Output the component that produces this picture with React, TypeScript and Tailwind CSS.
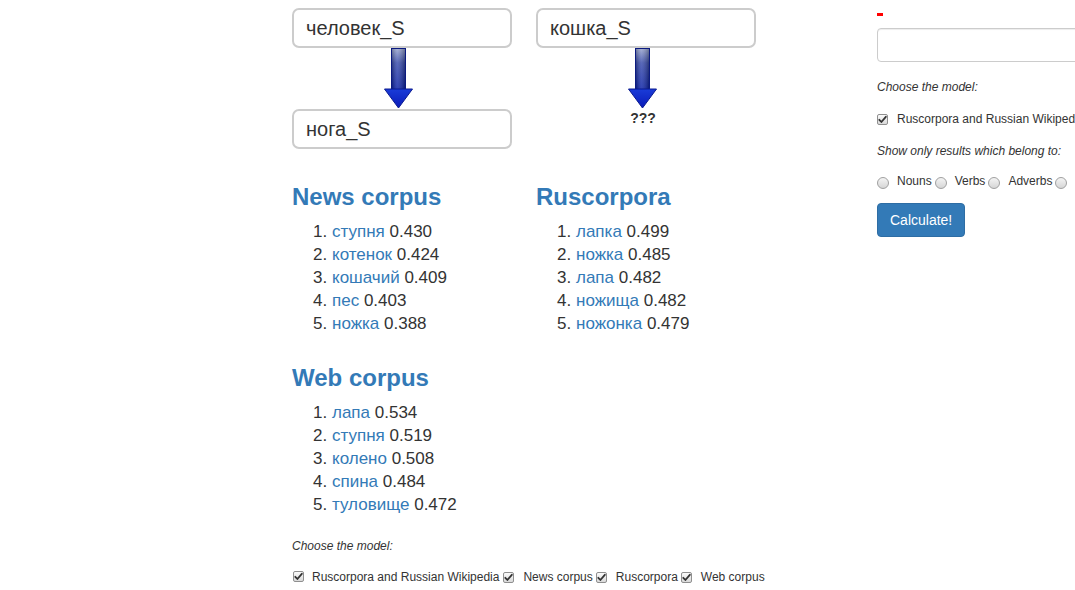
import React from "react";

const Arrow = () => (
  <svg width="30" height="61" viewBox="0 0 30 61" className="block">
    <defs>
      <linearGradient id="shaft" x1="0" y1="0" x2="0" y2="1">
        <stop offset="0" stopColor="#9aa6cf" />
        <stop offset="0.35" stopColor="#3c4fae" />
        <stop offset="1" stopColor="#0d23a8" />
      </linearGradient>
      <linearGradient id="shaftH" x1="0" y1="0" x2="1" y2="0">
        <stop offset="0" stopColor="#000" stopOpacity="0.25" />
        <stop offset="0.4" stopColor="#fff" stopOpacity="0.15" />
        <stop offset="1" stopColor="#000" stopOpacity="0.3" />
      </linearGradient>
      <linearGradient id="head" x1="0" y1="0" x2="0" y2="1">
        <stop offset="0" stopColor="#1a3cd8" />
        <stop offset="1" stopColor="#0a1ab8" />
      </linearGradient>
    </defs>
    <rect x="7.5" y="0.5" width="14" height="41" fill="url(#shaft)" stroke="#0b1a80" strokeWidth="1" />
    <rect x="8" y="1" width="13" height="40" fill="url(#shaftH)" />
    <path d="M0.5 41 L28.5 41 L14.5 60 Z" fill="url(#head)" stroke="#0a1a90" strokeWidth="1" strokeLinejoin="round" />
  </svg>
);

const Check = () => (
  <span className="inline-flex items-center justify-center w-[11px] h-[11px] rounded-[2px] border border-[#8f8f8f] bg-gradient-to-b from-[#fbfbfb] to-[#d9d9d9] shrink-0">
    <svg width="9" height="9" viewBox="0 0 9 9">
      <path d="M1.3 4.8 L3.4 7 L7.8 1.8" fill="none" stroke="#333" strokeWidth="1.8" strokeLinecap="round" strokeLinejoin="round" />
    </svg>
  </span>
);

const Radio = () => (
  <span className="inline-block w-[12px] h-[12px] rounded-full border border-[#a0a0a0] bg-gradient-to-b from-[#f4f4f4] to-[#d6d6d6] shrink-0" />
);

const BigInput = ({ value }: { value: string }) => (
  <div className="w-[220px] h-[40px] border-2 border-[#cccccc] rounded-[7px] flex items-center pl-[12px] text-[20px] text-[#333]">
    {value}
  </div>
);

type Item = [string, string];

const Block = ({ title, items }: { title: string; items: Item[] }) => (
  <div>
    <h3 className="text-[24px] leading-[26px] font-bold text-[#337ab7] mt-[35px] mb-[10px]">{title}</h3>
    <ol className="list-decimal pl-[40px] text-[17px] leading-[23px] text-[#333]">
      {items.map(([w, v]) => (
        <li key={w}>
          <span className="text-[#337ab7]">{w}</span> {v}
        </li>
      ))}
    </ol>
  </div>
);

export default function App() {
  return (
    <div
      className="w-[1075px] h-[590px] overflow-hidden bg-white flex text-[#333]"
      style={{ fontFamily: '"Liberation Sans", Arial, Helvetica, sans-serif' }}
    >
      <div className="w-[877px] shrink-0 pl-[292px]">
        <div className="grid grid-cols-[244px_244px] pt-[8px]">
          <div>
            <BigInput value="человек_S" />
            <div className="pl-[92px]">
              <Arrow />
            </div>
            <BigInput value="нога_S" />
          </div>
          <div>
            <BigInput value="кошка_S" />
            <div className="pl-[92px]">
              <Arrow />
            </div>
            <div className="w-[214px] text-center text-[14px] leading-[20px] font-bold -mt-[1px]">???</div>
          </div>
        </div>
        <div className="grid grid-cols-[244px_244px]">
          <Block
            title="News corpus"
            items={[
              ["ступня", "0.430"],
              ["котенок", "0.424"],
              ["кошачий", "0.409"],
              ["пес", "0.403"],
              ["ножка", "0.388"],
            ]}
          />
          <Block
            title="Ruscorpora"
            items={[
              ["лапка", "0.499"],
              ["ножка", "0.485"],
              ["лапа", "0.482"],
              ["ножища", "0.482"],
              ["ножонка", "0.479"],
            ]}
          />
        </div>
        <div className="-mt-[5px]">
          <Block
            title="Web corpus"
            items={[
              ["лапа", "0.534"],
              ["ступня", "0.519"],
              ["колено", "0.508"],
              ["спина", "0.484"],
              ["туловище", "0.472"],
            ]}
          />
        </div>
        <div className="mt-[22px] text-[12px] leading-[17px] italic">Choose the model:</div>
        <div className="mt-[14px] flex items-center text-[12px] leading-[17px] whitespace-nowrap">
          <span className="ml-[1px]">
            <Check />
          </span>
          <span className="ml-[8px] mr-[4px]">Ruscorpora and Russian Wikipedia</span>
          <Check />
          <span className="ml-[9px] mr-[3px]">News corpus</span>
          <Check />
          <span className="ml-[9px] mr-[3px]">Ruscorpora</span>
          <Check />
          <span className="ml-[9px]">Web corpus</span>
        </div>
      </div>
      <div className="w-[300px] shrink-0 text-[12px]">
        <div className="h-[20px] pt-[13px]">
          <div className="w-[6px] h-[3px] bg-[#ff0000]" />
        </div>
        <div className="mt-[8px] h-[34px] w-[260px] border border-[#cccccc] rounded-[4px] shadow-[inset_0_1px_1px_rgba(0,0,0,0.075)]" />
        <div className="mt-[17px] italic leading-[17px]">Choose the model:</div>
        <div className="mt-[15px] flex items-center leading-[17px] whitespace-nowrap">
          <Check />
          <span className="ml-[9px]">Ruscorpora and Russian Wikipedia</span>
        </div>
        <div className="mt-[15px] italic leading-[17px]">Show only results which belong to:</div>
        <div className="mt-[16px] flex items-center leading-[17px] whitespace-nowrap">
          <Radio />
          <span className="ml-[8px] mr-[3px] -mt-[3px]">Nouns</span>
          <Radio />
          <span className="ml-[8px] mr-[3px] -mt-[3px]">Verbs</span>
          <Radio />
          <span className="ml-[8px] mr-[3px] -mt-[3px]">Adverbs</span>
          <Radio />
        </div>
        <button className="mt-[13px] h-[34px] px-[12px] rounded-[4px] bg-[#337ab7] border border-[#2e6da4] text-white text-[14px] leading-[20px]">
          Calculate!
        </button>
      </div>
    </div>
  );
}
